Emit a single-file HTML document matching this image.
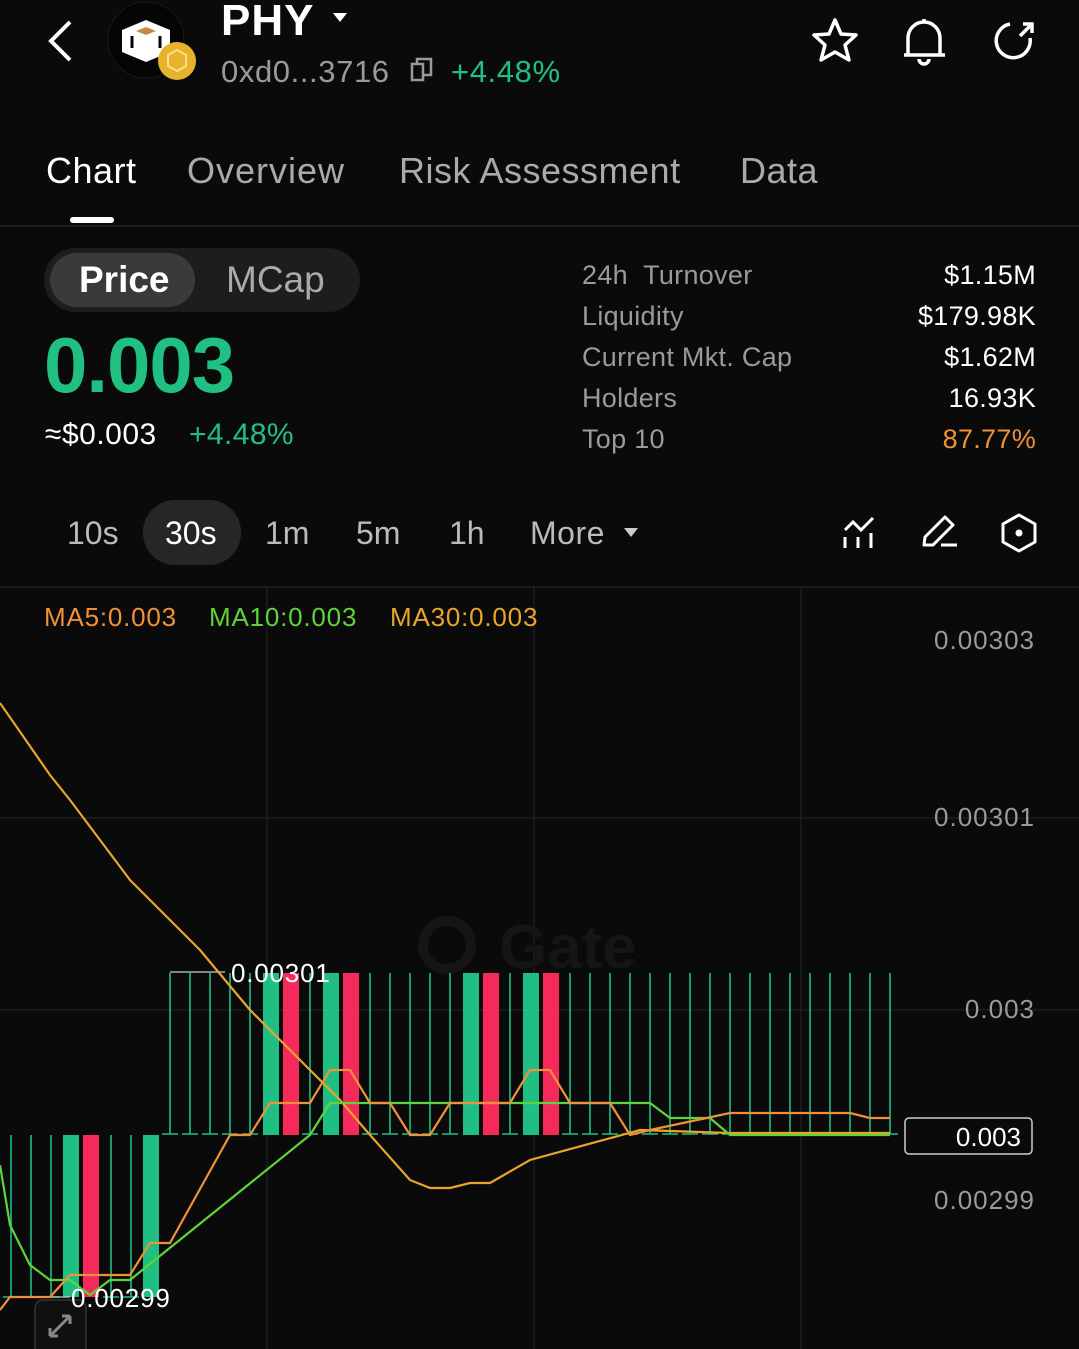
<!DOCTYPE html>
<html><head><meta charset="utf-8"><style>
*{margin:0;padding:0;box-sizing:border-box}
body{width:1079px;height:1349px;background:#0a0a0a;color:#fff;font-family:"Liberation Sans",sans-serif;position:relative;overflow:hidden}
.a{position:absolute;white-space:nowrap}
.g{color:#9a9a9a}
.gr{color:#20c083}
</style></head><body>
<svg class="a" style="left:0;top:0" width="1079" height="1349">
<path d="M70 22 L51 41 L70 60" stroke="#fff" stroke-width="4" fill="none"/>
<circle cx="146" cy="40" r="38" fill="#050505" stroke="#1a1a1a"/>
<path d="M122 30 L146 20 L170 30 L170 52 L146 62 L122 52Z" fill="#fff"/>
<path d="M136 31 L146 27 L156 31 L146 35Z" fill="#c58a40"/>
<path d="M132 36 L132 48 M160 36 L160 48" stroke="#050505" stroke-width="3"/>
<circle cx="177" cy="61" r="19" fill="#e8b32a"/>
<path d="M168 55 L177 50 L186 55 L186 66 L177 71 L168 66Z" fill="none" stroke="#fbe089" stroke-width="2"/>
<path d="M835 20 L841 34 L856 35 L845 45 L849 60 L835 52 L821 60 L825 45 L814 35 L829 34Z" fill="none" stroke="#fff" stroke-width="3.5" stroke-linejoin="round"/>
<path d="M908 54 V38 a16 16 0 0 1 32 0 V54 M904 55 H945 M919 59 a5 5 0 0 0 10 0 M924 19 v4" fill="none" stroke="#fff" stroke-width="3.5"/>
<path d="M1030 38 A17 17 0 1 1 1010 24 M1020 36 L1031 25 M1023 24 H1032 V33" fill="none" stroke="#fff" stroke-width="3.5"/>
<path d="M412 64 H423 V80 H412Z M417 64 V59 H431 V75 H423" fill="none" stroke="#9a9a9a" stroke-width="2.5"/>
<path d="M333 13 L347 13 L340 22Z" fill="#fff"/>
<rect x="70" y="217" width="44" height="6" rx="3" fill="#fff"/>
<line x1="0" y1="226" x2="1079" y2="226" stroke="#1c1c1c" stroke-width="2"/>
<rect x="44" y="248" width="316" height="64" rx="32" fill="#1d1d1d"/>
<rect x="50" y="253" width="145" height="54" rx="27" fill="#3a3a3a"/>
<rect x="143" y="500" width="98" height="65" rx="32" fill="#262626"/>
<path d="M624 528 L638 528 L631 537Z" fill="#ccc"/>
<path d="M845 530 L853 522 L861 530 L873 518 M845 537 V548 M858 537 V548 M871 533 V548" fill="none" stroke="#fff" stroke-width="3"/>
<path d="M924 545 L925 537 L945 517 L953 525 L933 545Z M941 545 H957" fill="none" stroke="#fff" stroke-width="3" stroke-linejoin="round"/>
<path d="M1019 515 L1035 524 L1035 542 L1019 551 L1003 542 L1003 524Z" fill="none" stroke="#fff" stroke-width="3" stroke-linejoin="round"/>
<circle cx="1019" cy="533" r="3.5" fill="#fff"/>
<line x1="0" y1="587" x2="1079" y2="587" stroke="#1c1c1c" stroke-width="2"/>
<g stroke="#1d1d1d" stroke-width="1.5">
<line x1="267" y1="588" x2="267" y2="1349"/><line x1="534" y1="588" x2="534" y2="1349"/><line x1="801" y1="588" x2="801" y2="1349"/>
<line x1="0" y1="818" x2="1079" y2="818"/><line x1="0" y1="1010" x2="1079" y2="1010"/>
</g>
<circle cx="447" cy="945" r="24" fill="none" stroke="#151515" stroke-width="10"/>
<text x="568" y="968" font-family="Liberation Sans" font-weight="bold" font-size="62" fill="#151515" text-anchor="middle">Gate</text>
<path stroke="#1fbf84" stroke-width="1.6" fill="none" d="
M170 973V1134M162 1134H178 M190 973V1134M182 1134H198 M210 973V1134M202 1134H218 M230 973V1134M222 1134H238 M250 973V1134M242 1134H258
M310 973V1134M302 1134H318 M370 973V1134M362 1134H378 M390 973V1134M382 1134H398 M410 973V1134M402 1134H418 M430 973V1134M422 1134H438 M450 973V1134M442 1134H458
M510 973V1134M502 1134H518 M570 973V1134M562 1134H578 M590 973V1134M582 1134H598 M610 973V1134M602 1134H618 M630 973V1134M622 1134H638 M650 973V1134M642 1134H658
M670 973V1134M662 1134H678 M690 973V1134M682 1134H698 M710 973V1134M702 1134H718 M730 973V1134M722 1134H738 M750 973V1134M742 1134H758 M770 973V1134M762 1134H778
M790 973V1134M782 1134H798 M810 973V1134M802 1134H818 M830 973V1134M822 1134H838 M850 973V1134M842 1134H858 M870 973V1134M862 1134H878 M890 973V1134M882 1134H898
M11 1135V1297M3 1297H19 M31 1135V1297M23 1297H39 M51 1135V1297M43 1297H59 M111 1135V1297M103 1297H119 M131 1135V1297M123 1297H139"/>
<g fill="#1fbf84"><rect x="263" y="973" width="16" height="162"/><rect x="323" y="973" width="16" height="162"/><rect x="463" y="973" width="16" height="162"/><rect x="523" y="973" width="16" height="162"/><rect x="63" y="1135" width="16" height="162"/><rect x="143" y="1135" width="16" height="162"/></g>
<g fill="#f5295a"><rect x="283" y="973" width="16" height="162"/><rect x="343" y="973" width="16" height="162"/><rect x="483" y="973" width="16" height="162"/><rect x="543" y="973" width="16" height="162"/><rect x="83" y="1135" width="16" height="162"/></g>
<path d="M170 972 H225" stroke="#ccc" stroke-width="1.2"/>
<path d="M40 1297 H70" stroke="#ccc" stroke-width="1.2"/>
<polyline fill="none" stroke="#e9a52a" stroke-width="2.2" points="0,703 50,775 70,800 130,880 200,950 250,1010 300,1060 340,1100 370,1135 410,1180 430,1188 450,1188 470,1183 490,1183 530,1160 640,1130 730,1133 890,1133"/>
<polyline fill="none" stroke="#5fd43a" stroke-width="2.2" points="0,1165 10,1225 30,1265 50,1280 70,1280 90,1295 110,1280 130,1280 310,1135 330,1103 650,1103 670,1118 710,1118 730,1135 890,1135"/>
<polyline fill="none" stroke="#f0903a" stroke-width="2.2" points="0,1310 10,1297 50,1297 70,1275 130,1275 150,1243 170,1243 230,1135 250,1135 270,1103 310,1103 330,1070 350,1070 370,1103 390,1103 410,1135 430,1135 450,1103 510,1103 530,1070 550,1070 570,1103 610,1103 630,1135 650,1130 730,1113 850,1113 870,1118 890,1118"/>
<rect x="905" y="1118" width="127" height="36" rx="4" fill="#0a0a0a" stroke="#ccc" stroke-width="1.5"/>
<rect x="35" y="1300" width="51" height="60" rx="8" fill="#101010" stroke="#333" stroke-width="1.5"/>
<path d="M50 1336 L70 1316 M50 1336 v-8 M50 1336 h8 M70 1316 h-8 M70 1316 v8" stroke="#888" stroke-width="3" fill="none"/>
</svg>

<div class="a" style="left:221px;top:-4px;font-size:44px;font-weight:bold;letter-spacing:1px">PHY</div>
<div class="a g" style="left:221px;top:54px;font-size:31px;letter-spacing:0.6px">0xd0...3716</div>
<div class="a gr" style="left:451px;top:54px;font-size:31px;letter-spacing:0.6px">+4.48%</div>

<div class="a" style="left:46px;top:150px;font-size:36px;letter-spacing:0.5px">Chart</div>
<div class="a" style="left:187px;top:150px;font-size:36px;color:#aaa;letter-spacing:1px">Overview</div>
<div class="a" style="left:399px;top:150px;font-size:36px;color:#aaa;letter-spacing:0.5px">Risk Assessment</div>
<div class="a" style="left:740px;top:150px;font-size:36px;color:#aaa;letter-spacing:0.5px">Data</div>

<div class="a" style="left:79px;top:259px;font-size:37px;font-weight:bold">Price</div>
<div class="a" style="left:226px;top:259px;font-size:37px;color:#aaa">MCap</div>
<div class="a gr" style="left:44px;top:320px;font-size:78px;font-weight:bold;letter-spacing:-1px">0.003</div>
<div class="a" style="left:45px;top:418px;font-size:30px;letter-spacing:0.5px">≈$0.003</div>
<div class="a gr" style="left:189px;top:418px;font-size:30px;letter-spacing:0.4px">+4.48%</div>

<div class="a g" style="left:582px;top:255px;font-size:27px;line-height:41px;letter-spacing:0.3px">24h&nbsp; Turnover<br>Liquidity<br>Current Mkt. Cap<br>Holders<br>Top 10</div>
<div class="a" style="right:43px;top:255px;font-size:27px;line-height:41px;text-align:right;letter-spacing:0.3px">$1.15M<br>$179.98K<br>$1.62M<br>16.93K<br><span style="color:#f0903a">87.77%</span></div>

<div class="a" style="left:67px;top:515px;font-size:32px;color:#bbb">10s</div>
<div class="a" style="left:165px;top:515px;font-size:32px">30s</div>
<div class="a" style="left:265px;top:515px;font-size:32px;color:#bbb">1m</div>
<div class="a" style="left:356px;top:515px;font-size:32px;color:#bbb">5m</div>
<div class="a" style="left:449px;top:515px;font-size:32px;color:#bbb">1h</div>
<div class="a" style="left:530px;top:515px;font-size:32px;color:#bbb;letter-spacing:0.5px">More</div>

<div class="a" style="left:44px;top:602px;font-size:26px;color:#f0903a;letter-spacing:0.8px">MA5:0.003</div>
<div class="a" style="left:209px;top:602px;font-size:26px;color:#5fd43a;letter-spacing:0.8px">MA10:0.003</div>
<div class="a" style="left:390px;top:602px;font-size:26px;color:#e9a52a;letter-spacing:0.8px">MA30:0.003</div>

<div class="a g" style="right:44px;top:625px;font-size:26px;letter-spacing:1px">0.00303</div>
<div class="a g" style="right:44px;top:802px;font-size:26px;letter-spacing:1px">0.00301</div>
<div class="a g" style="right:44px;top:994px;font-size:26px;letter-spacing:1px">0.003</div>
<div class="a g" style="right:44px;top:1185px;font-size:26px;letter-spacing:1px">0.00299</div>
<div class="a" style="right:58px;top:1122px;font-size:26px">0.003</div>
<div class="a" style="left:231px;top:958px;font-size:26px;letter-spacing:0.8px">0.00301</div>
<div class="a" style="left:71px;top:1283px;font-size:26px;letter-spacing:0.8px">0.00299</div>
</body></html>
